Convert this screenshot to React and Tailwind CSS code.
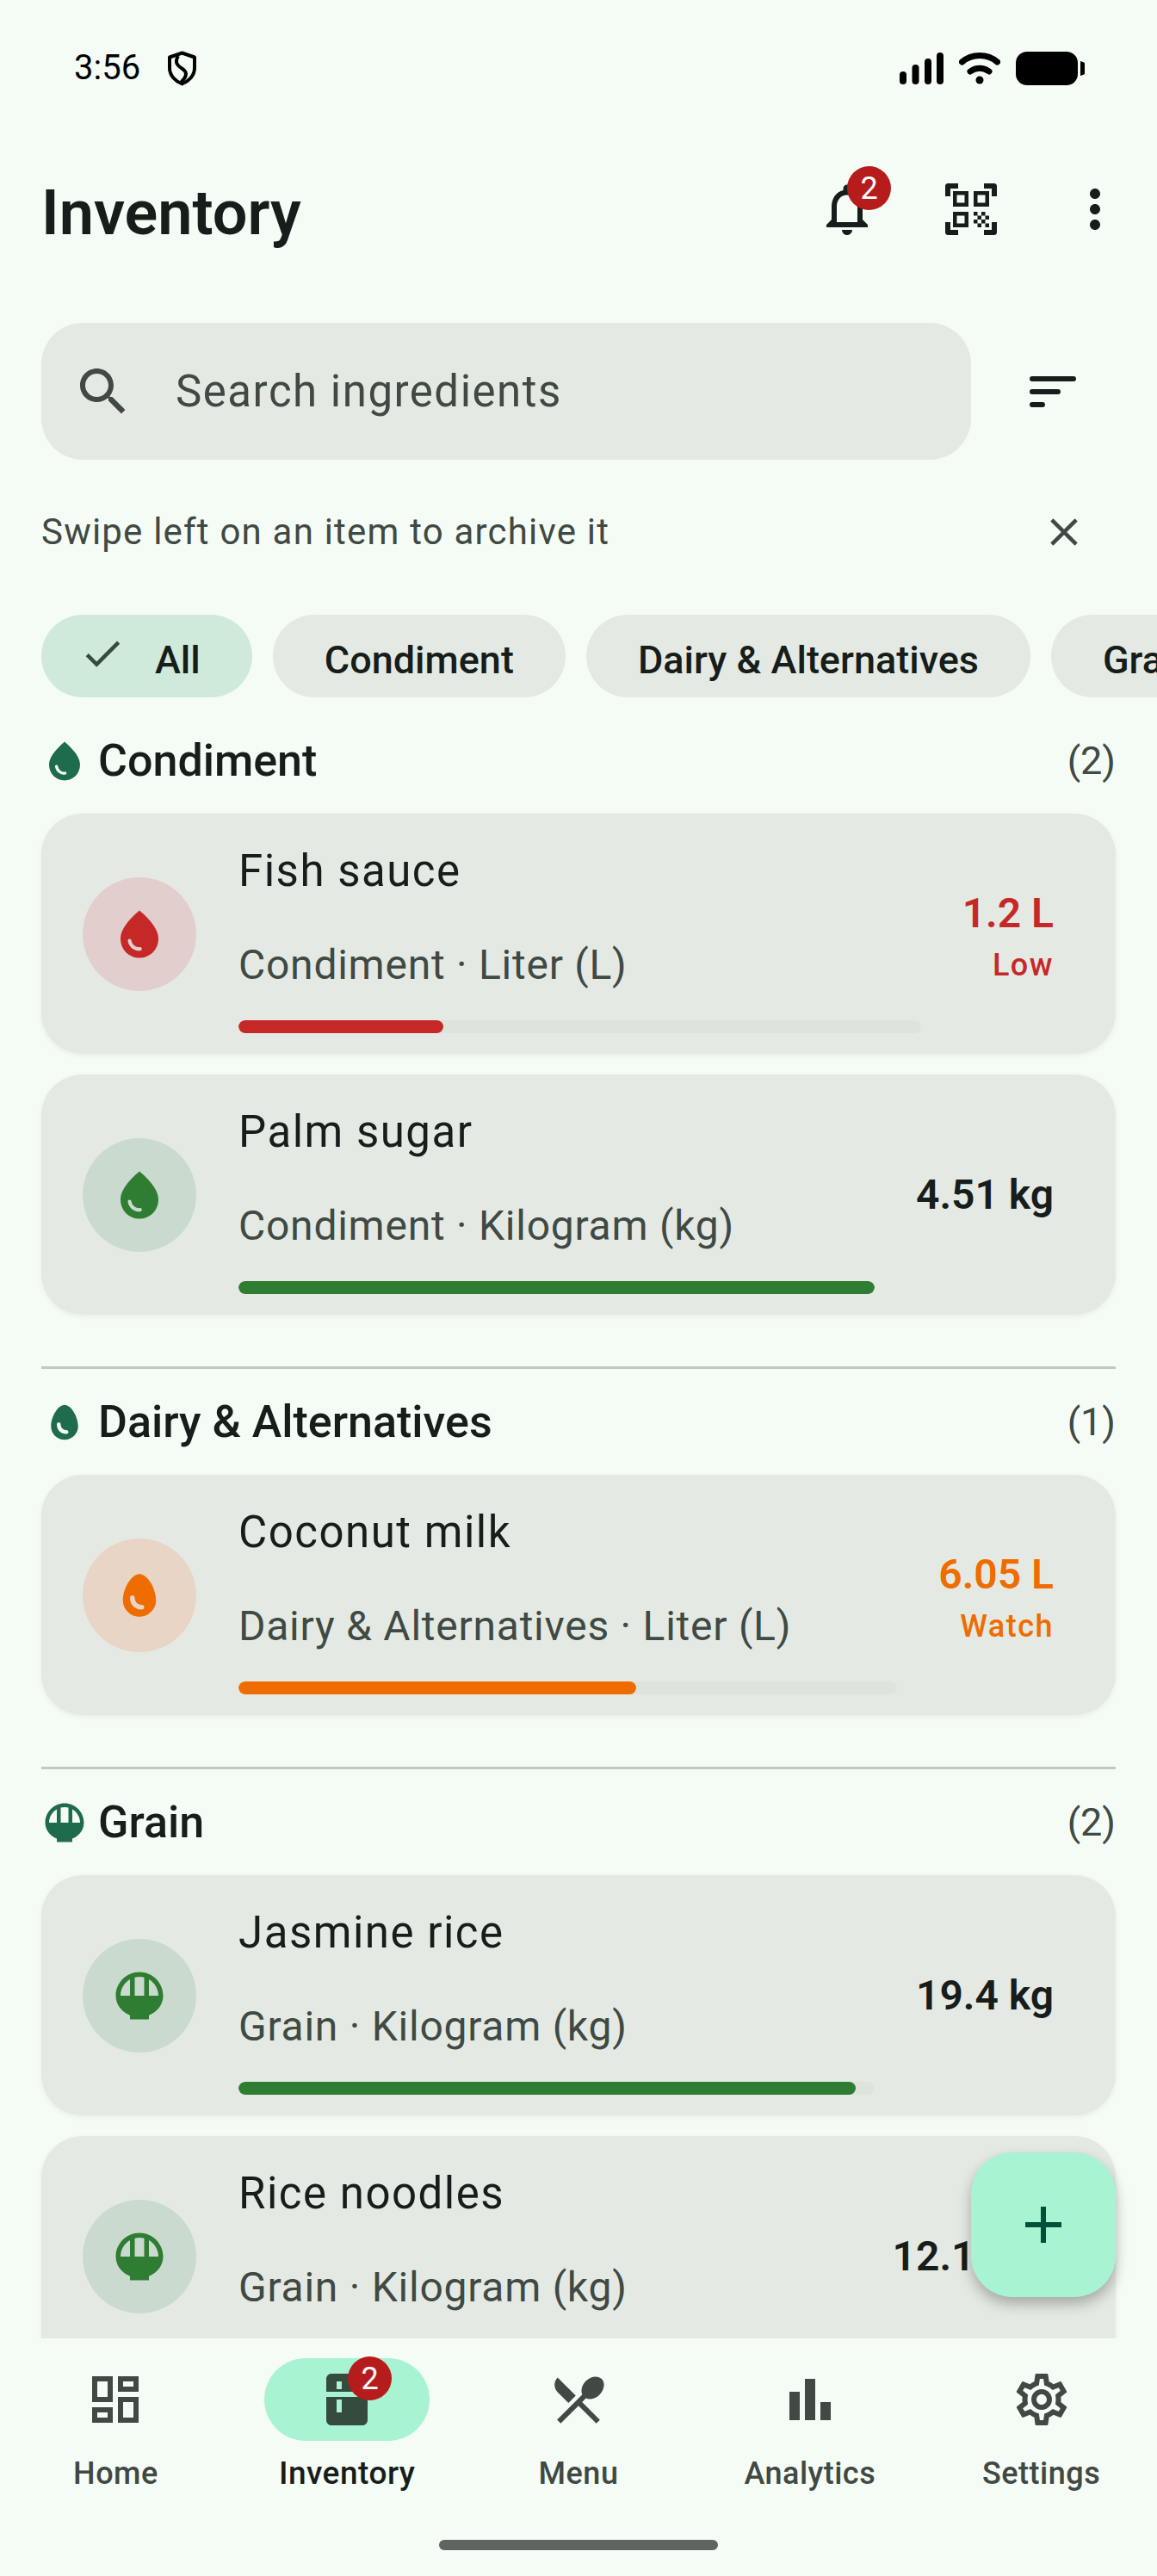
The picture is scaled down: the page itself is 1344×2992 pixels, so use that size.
import React from 'react';

const paths = {
    bell: 'M12 22c1.1 0 2-.9 2-2h-4c0 1.1.9 2 2 2zm6-6v-5c0-3.07-1.63-5.64-4.5-6.32V4c0-.83-.67-1.5-1.5-1.5s-1.5.67-1.5 1.5v.68C7.64 5.36 6 7.92 6 11v5l-2 2v1h16v-1l-2-2zm-2 1H8v-6c0-2.48 1.51-4.5 4-4.5s4 2.02 4 4.5v6z',
    qr: 'M9.5,6.5v3h-3v-3H9.5 M11,5H5v6h6V5L11,5z M9.5,14.5v3h-3v-3H9.5 M11,13H5v6h6V13L11,13z M17.5,6.5v3h-3v-3H17.5 M19,5h-6v6h6V5 L19,5z M13,13h1.5v1.5H13V13z M14.5,14.5H16V16h-1.5V14.5z M16,13h1.5v1.5H16V13z M13,16h1.5v1.5H13V16z M14.5,17.5H16V19h-1.5V17.5z M16,16h1.5v1.5H16V16z M17.5,14.5H19V16h-1.5V14.5z M17.5,17.5H19V19h-1.5V17.5z M22,7h-2V4h-3V2h4c.55 0 1 .45 1 1V7z M22,21v-4h-2v3h-3v2h4c.55 0 1-.45 1-1z M3,22h4v-2H4v-3H2v4c0 .55.45 1 1 1z M2,3v4h2V4h3V2H3c-.55 0-1 .45-1 1z',
    more: 'M12 8c1.1 0 2-.9 2-2s-.9-2-2-2-2 .9-2 2 .9 2 2 2zm0 2c-1.1 0-2 .9-2 2s.9 2 2 2 2-.9 2-2-.9-2-2-2zm0 6c-1.1 0-2 .9-2 2s.9 2 2 2 2-.9 2-2-.9-2-2-2z',
    search: 'M15.5 14h-.79l-.28-.27C15.41 12.59 16 11.11 16 9.5 16 5.91 13.09 3 9.5 3S3 5.91 3 9.5 5.91 16 9.5 16c1.61 0 3.09-.59 4.23-1.57l.27.28v.79l5 4.99L20.49 19l-4.99-5zm-6 0C7.01 14 5 11.99 5 9.5S7.01 5 9.5 5 14 7.01 14 9.5 11.99 14 9.5 14z',
    close: 'M19 6.41L17.59 5 12 10.59 6.41 5 5 6.41 10.59 12 5 17.59 6.41 19 12 13.41 17.59 19 19 17.59 13.41 12z',
    check: 'M9 16.17L4.83 12l-1.41 1.41L9 19 21 7l-1.41-1.41z',
    drop: 'M12,2c-5.33,4.55-8,8.48-8,11.8c0,4.98,3.8,8.2,8,8.2s8-3.22,8-8.2C20,10.48,17.33,6.55,12,2z M7.83,14c0.37,0,0.67,0.26,0.74,0.62c0.41,2.22,2.28,2.98,3.64,2.87c0.43-0.02,0.79,0.32,0.79,0.75c0,0.4-0.32,0.73-0.72,0.75c-2.13,0.13-4.62-1.09-5.19-4.12C7.01,14.42,7.37,14,7.83,14z',
    egg: 'M12 3C8.5 3 5 9.33 5 14c0 3.87 3.13 7 7 7 3.87 0 7-3.13 7-7 0-4.67-3.5-11-7-11zm1 15c-3 0-5-1.99-5-5 0-.55.45-1 1-1s1 .45 1 1c0 2.2 1.78 3 3 3 .55 0 1 .45 1 1s-.45 1-1 1z',
    rice: 'M22,12L22,12c0-5.52-4.48-10-10-10S2,6.48,2,12c0,3.69,2.47,6.86,6,8.25V22h8v-1.75C19.53,18.86,22,15.69,22,12z M20,12h-4 V5.08C18.39,6.47,20,9.05,20,12z M14,4.26V12h-4V4.26C10.64,4.1,11.31,4,12,4S13.36,4.1,14,4.26z M4,12 c0-2.95,1.61-5.53,4-6.92V12H4z',
    dashboard: 'M19 5v2h-4V5h4M9 5v6H5V5h4m10 8v6h-4v-6h4M9 17v2H5v-2h4M21 3h-8v6h8V3zM11 3H3v10h8V3zm10 8h-8v10h8V11zm-10 4H3v6h8v-6z',
    kitchen: 'M20 9V4c0-1.11-.9-1.99-2-1.99L6 2C4.9 2 4 2.89 4 4v5h16zM8 5h2v3H8V5zM4 11v9c0 1.1.9 2 2 2h12c1.1 0 2-.9 2-2v-9H4zM10 17H8v-5h2v5z',
    menu: 'M8.1 13.34l2.83-2.83L3.91 3.5c-1.56 1.56-1.56 4.09 0 5.66l4.19 4.18zm6.78-1.81c1.53.71 3.68.21 5.27-1.38 1.91-1.91 2.28-4.65.81-6.12-1.46-1.46-4.2-1.1-6.12.81-1.59 1.59-2.09 3.74-1.38 5.27L3.7 19.87l1.41 1.41L12 14.41l6.88 6.88 1.41-1.41L13.41 13l1.47-1.47z',
    bars: 'M4 9h4v11H4zm6-5h4v16h-4zm6 9h4v7h-4z',
    settings: 'M19.43 12.98c.04-.32.07-.64.07-.98s-.03-.66-.07-.98l2.11-1.65c.19-.15.24-.42.12-.64l-2-3.46c-.12-.22-.39-.3-.61-.22l-2.49 1c-.52-.4-1.08-.73-1.69-.98l-.38-2.65C14.46 2.18 14.25 2 14 2h-4c-.25 0-.46.18-.49.42l-.38 2.65c-.61.25-1.17.59-1.69.98l-2.49-1c-.23-.09-.49 0-.61.22l-2 3.46c-.13.22-.07.49.12.64l2.11 1.65c-.04.32-.07.65-.07.98s.03.66.07.98l-2.11 1.65c-.19.15-.24.42-.12.64l2 3.46c.12.22.39.3.61.22l2.49-1c.52.4 1.08.73 1.69.98l.38 2.65c.03.24.24.42.49.42h4c.25 0 .46-.18.49-.42l.38-2.65c.61-.25 1.17-.59 1.69-.98l2.49 1c.23.09.49 0 .61-.22l2-3.46c.12-.22.07-.49-.12-.64l-2.11-1.65zM17.45 11.27c.04.31.05.52.05.73 0 .21-.02.43-.05.73l-.14 1.13.89.7 1.08.84-.7 1.21-1.27-.51-1.04-.42-.9.68c-.43.32-.84.56-1.25.73l-1.06.43-.16 1.13-.2 1.35h-1.4l-.19-1.35-.16-1.13-1.06-.43c-.43-.18-.83-.41-1.23-.71l-.91-.7-1.06.43-1.27.51-.7-1.21 1.08-.84.89-.7-.14-1.13c-.03-.31-.05-.54-.05-.74s.02-.43.05-.73l.14-1.13-.89-.7-1.08-.84.7-1.21 1.27.51 1.04.42.9-.68c.43-.32.84-.56 1.25-.73l1.06-.43.16-1.13.2-1.35h1.39l.19 1.35.16 1.13 1.06.43c.43.18.83.41 1.23.71l.91.7 1.06-.43 1.27-.51.7 1.21-1.07.85-.89.7.14 1.13zM12 8c-2.21 0-4 1.79-4 4s1.79 4 4 4 4-1.79 4-4-1.79-4-4-4zm0 6c-1.1 0-2-.9-2-2s.9-2 2-2 2 .9 2 2-.9 2-2 2z',
    plus: 'M19 13h-6v6h-2v-6H5v-2h6V5h2v6h6v2z',
};

const Icon = ({ name, className }) => (
    <svg viewBox="0 0 24 24" fill="currentColor" fillRule="evenodd" className={`shrink-0 ${className}`}>
        <path d={paths[name]} />
    </svg>
);

const Badge = ({ className }) => (
    <span className={`absolute flex items-center justify-center w-[51px] h-[51px] rounded-full bg-[#b71c1c] text-white text-[36px] leading-none ${className}`}>2</span>
);

const StatusBar = () => (
    <div className="h-[154px] shrink-0 flex items-center pt-[4px] pl-[86px] pr-[84px] text-black">
        <span className="text-[40px] leading-none mt-[-1px]">3:56</span>
        <svg viewBox="0 0 33 41" fill="none" stroke="black" strokeWidth="4" className="ml-[32px] w-[33px] h-[41px]">
            <path d="M16.5 2.5 L31 7.5 V20 C31 29 24 35.5 16.5 38.5 C9 35.5 2 29 2 20 V7.5 Z" strokeLinejoin="round" />
            <path d="M12 6 C7 14 12 18 17 21 C23 25 22 30 15 37" />
        </svg>
        <div className="ml-auto flex items-center">
            <svg viewBox="0 0 51 37" fill="black" className="w-[51px] h-[37px]">
                <rect x="0" y="22" width="8" height="15" rx="4" />
                <rect x="14.5" y="14" width="8" height="23" rx="4" />
                <rect x="29" y="7" width="8" height="30" rx="4" />
                <rect x="43" y="0" width="8" height="37" rx="4" />
            </svg>
            <svg viewBox="0 0 48 37" fill="none" stroke="black" strokeWidth="7" strokeLinecap="round" className="ml-[18px] w-[48px] h-[37px]">
                <path d="M3.5 11 C15 1 33 1 44.5 11" />
                <path d="M13 22 C20 17 28 17 35 22" />
                <circle cx="24" cy="32" r="4.5" fill="black" stroke="none" />
            </svg>
            <svg viewBox="0 0 80 39" fill="black" className="ml-[18px] w-[80px] h-[39px]">
                <rect x="0" y="0" width="72" height="39" rx="13" />
                <path d="M75 11 L78 12 C79.5 12.5 80 13 80 14 V25 C80 26 79.5 26.5 78 27 L75 28 Z" />
            </svg>
        </div>
    </div>
);

const Header = () => (
    <div className="h-[178px] shrink-0 flex items-center pl-[48px] pr-[36px] text-[#171d1a]">
        <h1 className="text-[72px] leading-none font-semibold mt-[10px]">Inventory</h1>
        <div className="ml-auto flex items-center gap-[72px]">
            <div className="relative w-[72px] h-[72px]">
                <Icon name="bell" className="w-[72px] h-[72px]" />
                <Badge className="left-[36px] top-[-14px]" />
            </div>
            <Icon name="qr" className="w-[72px] h-[72px]" />
            <Icon name="more" className="w-[72px] h-[72px]" />
        </div>
    </div>
);

const SearchRow = () => (
    <div className="mt-[43px] shrink-0 flex items-center pl-[48px]">
        <div className="w-[1080px] h-[159px] rounded-[48px] bg-[#e4eae3] flex items-center pl-[36px] text-[#404943]">
            <Icon name="search" className="w-[72px] h-[72px]" />
            <span className="ml-[48px] text-[51px] leading-none tracking-[1.5px]">Search ingredients</span>
        </div>
        <svg viewBox="0 0 54 36" fill="none" stroke="#171d1a" strokeWidth="6" strokeLinecap="round" className="ml-[68px] w-[54px] h-[36px]">
            <path d="M3 3 H51 M3 18 H33 M3 33 H15" />
        </svg>
    </div>
);

const HintRow = () => (
    <div className="mt-[36px] h-[96px] shrink-0 flex items-center justify-between pl-[48px] pr-[81px] text-[#404943]">
        <span className="text-[42px] leading-none tracking-[1.2px]">Swipe left on an item to archive it</span>
        <Icon name="close" className="w-[54px] h-[54px]" />
    </div>
);

const Chip = ({ label, selected }) => (
    <div className={`h-[96px] shrink-0 rounded-[48px] flex items-center text-[45px] font-medium text-[#171d1a] ${selected ? 'bg-[#cfe9da] pl-[44px] pr-[60px]' : 'bg-[#e4eae3] px-[60px]'}`}>
        {selected && <Icon name="check" className="w-[54px] h-[54px] mr-[34px] mt-[-6px] text-[#344b3e]" />}
        <span className="leading-none mt-[8px]">{label}</span>
    </div>
);

const Chips = () => (
    <div className="mt-[48px] shrink-0 flex gap-[24px] pl-[48px] overflow-hidden">
        <Chip label="All" selected />
        <Chip label="Condiment" />
        <Chip label="Dairy & Alternatives" />
        <Chip label="Grain" />
    </div>
);

const tones = {
    red: { fg: 'text-[#c62828]', bar: 'bg-[#c62828]', circle: 'bg-[#e2cfcd]' },
    orange: { fg: 'text-[#ef6c00]', bar: 'bg-[#ef6c00]', circle: 'bg-[#e8d5c5]' },
    green: { fg: 'text-[#2e7d32]', bar: 'bg-[#2e7d32]', circle: 'bg-[#cbdace]' },
};

const ItemCard = ({ name, sub, value, status, pct, tone, icon }) => {
    const t = tones[tone];
    return (
        <div className="h-[279px] shrink-0 rounded-[48px] bg-[#e4eae3] shadow-[0_2px_6px_rgba(0,0,0,0.06)] flex items-center pl-[48px] pr-[72px]">
            <div className={`w-[132px] h-[132px] shrink-0 rounded-full flex items-center justify-center ${t.circle}`}>
                <Icon name={icon} className={`w-[66px] h-[66px] ${t.fg}`} />
            </div>
            <div className="ml-[49px] flex-1 min-w-0 self-start pt-[39px]">
                <p className="text-[51px] leading-[56px] tracking-[1.5px] text-[#171d1a]">{name}</p>
                <p className="mt-[53px] text-[48px] leading-[56px] tracking-[0.75px] text-[#404943]">{sub}</p>
                <div className="mt-[36px] h-[15px] rounded-full bg-[#dde4dc] overflow-hidden">
                    <div className={`h-full rounded-full ${t.bar}`} style={{ width: `${pct}%` }} />
                </div>
            </div>
            <div className={`ml-[48px] shrink-0 text-right ${status ? 'mt-[6px]' : ''}`}>
                <p className={`text-[48px] leading-none font-semibold ${status ? t.fg : 'text-[#171d1a]'}`}>{value}</p>
                {status && <p className={`mt-[18px] text-[36px] leading-none font-medium tracking-[1.5px] ${t.fg}`}>{status}</p>}
            </div>
        </div>
    );
};

const SectionHead = ({ icon, title, count }) => (
    <div className="h-[123px] flex items-center justify-between">
        <div className="flex items-center">
            <Icon name={icon} className="w-[54px] h-[54px] text-[#1f6b4e]" />
            <span className="ml-[12px] text-[52px] leading-none font-medium text-[#171d1a]">{title}</span>
        </div>
        <span className="text-[45px] leading-none text-[#404943]">({count})</span>
    </div>
);

const Divider = () => <div className="mt-[60px] h-[3px] bg-[#bfc9c2]" />;

const NavItem = ({ icon, label, active }) => (
    <div className="flex flex-col items-center">
        <div className={`relative w-[192px] h-[96px] rounded-[48px] flex items-center justify-center ${active ? 'bg-[#a8f3d2] text-[#344b3e]' : 'text-[#404943]'}`}>
            <Icon name={icon} className="w-[72px] h-[72px]" />
            {active && <Badge className="left-[97px] top-[-2px]" />}
        </div>
        <span className={`mt-[16px] leading-[44px] font-medium ${active ? 'text-[37px] tracking-[0.5px] text-[#171d1a]' : 'text-[36px] tracking-[0.5px] text-[#404943]'}`}>{label}</span>
    </div>
);

const BottomNav = () => (
    <div className="h-[276px] shrink-0 relative pt-[23px]">
        <div className="grid grid-cols-5">
            <NavItem icon="dashboard" label="Home" />
            <NavItem icon="kitchen" label="Inventory" active />
            <NavItem icon="menu" label="Menu" />
            <NavItem icon="bars" label="Analytics" />
            <NavItem icon="settings" label="Settings" />
        </div>
        <div className="absolute left-[510px] bottom-[30px] w-[324px] h-[12px] rounded-full bg-[#606461]" />
    </div>
);

export default function App() {
    return (
        <div className="relative w-[1344px] h-[2992px] overflow-hidden bg-[#f5fcf5] flex flex-col font-['Roboto',sans-serif]">
            <StatusBar />
            <Header />
            <SearchRow />
            <HintRow />
            <Chips />
            <div className="flex-1 min-h-0 overflow-hidden px-[48px] pt-[12px]">
                <SectionHead icon="drop" title="Condiment" count="2" />
                <div className="flex flex-col gap-[24px]">
                    <ItemCard name="Fish sauce" sub="Condiment · Liter (L)" value="1.2 L" status="Low" pct={30} tone="red" icon="drop" />
                    <ItemCard name="Palm sugar" sub="Condiment · Kilogram (kg)" value="4.51 kg" pct={100} tone="green" icon="drop" />
                </div>
                <Divider />
                <SectionHead icon="egg" title="Dairy & Alternatives" count="1" />
                <ItemCard name="Coconut milk" sub="Dairy & Alternatives · Liter (L)" value="6.05 L" status="Watch" pct={60.4} tone="orange" icon="egg" />
                <Divider />
                <SectionHead icon="rice" title="Grain" count="2" />
                <div className="flex flex-col gap-[24px]">
                    <ItemCard name="Jasmine rice" sub="Grain · Kilogram (kg)" value="19.4 kg" pct={97} tone="green" icon="rice" />
                    <ItemCard name="Rice noodles" sub="Grain · Kilogram (kg)" value="12.12 kg" pct={65} tone="green" icon="rice" />
                </div>
            </div>
            <BottomNav />
            <div className="absolute left-[1128px] top-[2500px] w-[168px] h-[168px] rounded-[48px] bg-[#a8f3d2] shadow-[0_8px_16px_rgba(0,0,0,0.28)] flex items-center justify-center text-[#00513a]">
                <Icon name="plus" className="w-[72px] h-[72px]" />
            </div>
        </div>
    );
}
